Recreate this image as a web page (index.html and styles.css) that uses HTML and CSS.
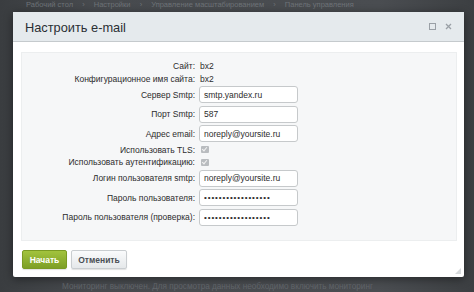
FILE: index.html
```html
<!DOCTYPE html>
<html lang="ru">
<head>
  <meta charset="UTF-8">
  <title>Настроить e-mail</title>
  <link rel="stylesheet" href="styles.css">
</head>
<body>
  <div class="crumbs">Рабочий стол <span>›</span> Настройки <span>›</span> Управление масштабированием <span>›</span> Панель управления</div>

  <div class="dialog">
    <div class="dialog-head">
      <span class="dialog-title">Настроить e-mail</span>
      <span class="head-icons">
        <svg width="7" height="7" viewBox="0 0 7 7"><rect x="0.5" y="0.5" width="6" height="6" fill="none" stroke="#9aa0a6" stroke-width="1"/></svg>
        <svg width="7" height="7" viewBox="0 0 7 7"><path d="M1 1L6 6M6 1L1 6" stroke="#9aa0a6" stroke-width="1.3"/></svg>
      </span>
    </div>

    <div class="dialog-body">
      <div class="panel">
        <div class="row text"><label>Сайт:</label><span>bx2</span></div>
        <div class="row text"><label>Конфигурационное имя сайта:</label><span>bx2</span></div>
        <div class="row"><label>Сервер Smtp:</label><input type="text" value="smtp.yandex.ru"></div>
        <div class="row"><label>Порт Smtp:</label><input type="text" value="587"></div>
        <div class="row"><label>Адрес email:</label><input type="text" value="noreply@yoursite.ru"></div>
        <div class="row text"><label>Использовать TLS:</label><span class="check"></span></div>
        <div class="row text"><label>Использовать аутентификацию:</label><span class="check"></span></div>
        <div class="row"><label>Логин пользователя smtp:</label><input type="text" value="noreply@yoursite.ru"></div>
        <div class="row"><label>Пароль пользователя:</label><input type="password" value="123456789012345678"></div>
        <div class="row"><label>Пароль пользователя (проверка):</label><input type="password" value="123456789012345678"></div>
      </div>
    </div>

    <div class="dialog-foot">
      <button class="btn btn-green">Начать</button>
      <button class="btn">Отменить</button>
      <span class="resize"></span>
    </div>
  </div>

  <div class="note">Мониторинг выключен. Для просмотра данных необходимо включить мониторинг</div>
</body>
</html>
```

FILE: styles.css
```css
body {
  margin: 0;
  height: 292px;
  overflow: hidden;
  font-family: "Liberation Sans", Arial, sans-serif;
  background: linear-gradient(90deg, #3a3d40 0%, #474a4e 20%, #4a4d51 80%, #3c3f42 100%);
}

.crumbs {
  height: 12px;
  padding-left: 26px;
  font-size: 7.5px;
  line-height: 10px;
  color: #6e7378;
  white-space: nowrap;
}

.crumbs span {
  margin: 0 7px;
}

.dialog {
  margin-left: 13px;
  width: 451px;
  background: #fff;
  border-radius: 2px;
  box-shadow: 0 2px 10px rgba(0,0,0,0.45);
  position: relative;
}

.dialog-head {
  height: 29px;
  background: #e5eaed;
  border-bottom: 1px solid #c5cacd;
  display: flex;
  align-items: center;
  padding: 0 11px 0 12px;
}

.dialog-title {
  flex: 1;
  font-size: 12.8px;
  color: #2a2f34;
  padding-top: 1px;
}

.head-icons {
  display: flex;
  gap: 9px;
  align-items: center;
  padding-right: 1px;
}

.dialog-body {
  padding: 10px 7px 0 8px;
}

.panel {
  background: #f6f7f8;
  border: 1px solid #eceeef;
  padding: 7px 0 13px 0;
}

.row {
  display: flex;
  align-items: center;
  height: 19.5px;
  font-size: 8.5px;
  color: #2c2c2c;
}

.row.text {
  height: 12.5px;
}

.row label {
  width: 173px;
  text-align: right;
  padding-right: 4px;
  flex-shrink: 0;
}

.row span {
  padding-left: 1px;
}

.row input {
  width: 89px;
  height: 15px;
  padding: 0 4px;
  border: 1px solid #c6c9cb;
  border-radius: 3px;
  background: #fff;
  font-family: "Liberation Sans", Arial, sans-serif;
  font-size: 8.5px;
  color: #2c2c2c;
  margin: 0;
}

.row input[type="password"] {
  font-size: 8px;
  letter-spacing: 0.9px;
}

.check {
  width: 7px;
  height: 7px;
  margin-left: 2px;
  background: #b9bcbf;
  border-radius: 1px;
  position: relative;
}

.check::after {
  content: "";
  position: absolute;
  left: 2px;
  top: 0px;
  width: 2px;
  height: 4px;
  border: solid #f2f2f2;
  border-width: 0 1px 1px 0;
  transform: rotate(40deg);
}

.dialog-foot {
  height: 36px;
  padding: 9px 0 0 9px;
  display: flex;
  gap: 4px;
  align-items: flex-start;
  box-sizing: border-box;
}

.btn {
  height: 19px;
  padding: 0;
  width: 56px;
  border: 1px solid #c9cdd0;
  border-radius: 2px;
  background: linear-gradient(#fafbfc, #e5e8ea);
  font-family: "Liberation Sans", Arial, sans-serif;
  font-size: 8.5px;
  font-weight: bold;
  color: #4a4f55;
  box-shadow: 0 1px 1px rgba(0,0,0,0.12);
}

.btn-green {
  width: 45px;
  border-color: #7a9a23;
  background: linear-gradient(#a2c33d, #7d9f26);
  color: #fff;
}

.resize {
  position: absolute;
  right: 3px;
  bottom: 3px;
  width: 0;
  height: 0;
  border-left: 6px solid transparent;
  border-bottom: 6px solid #d7dadc;
}

.note {
  padding: 5px 0 0 62px;
  font-size: 8.2px;
  color: #62666b;
  white-space: nowrap;
}
```
